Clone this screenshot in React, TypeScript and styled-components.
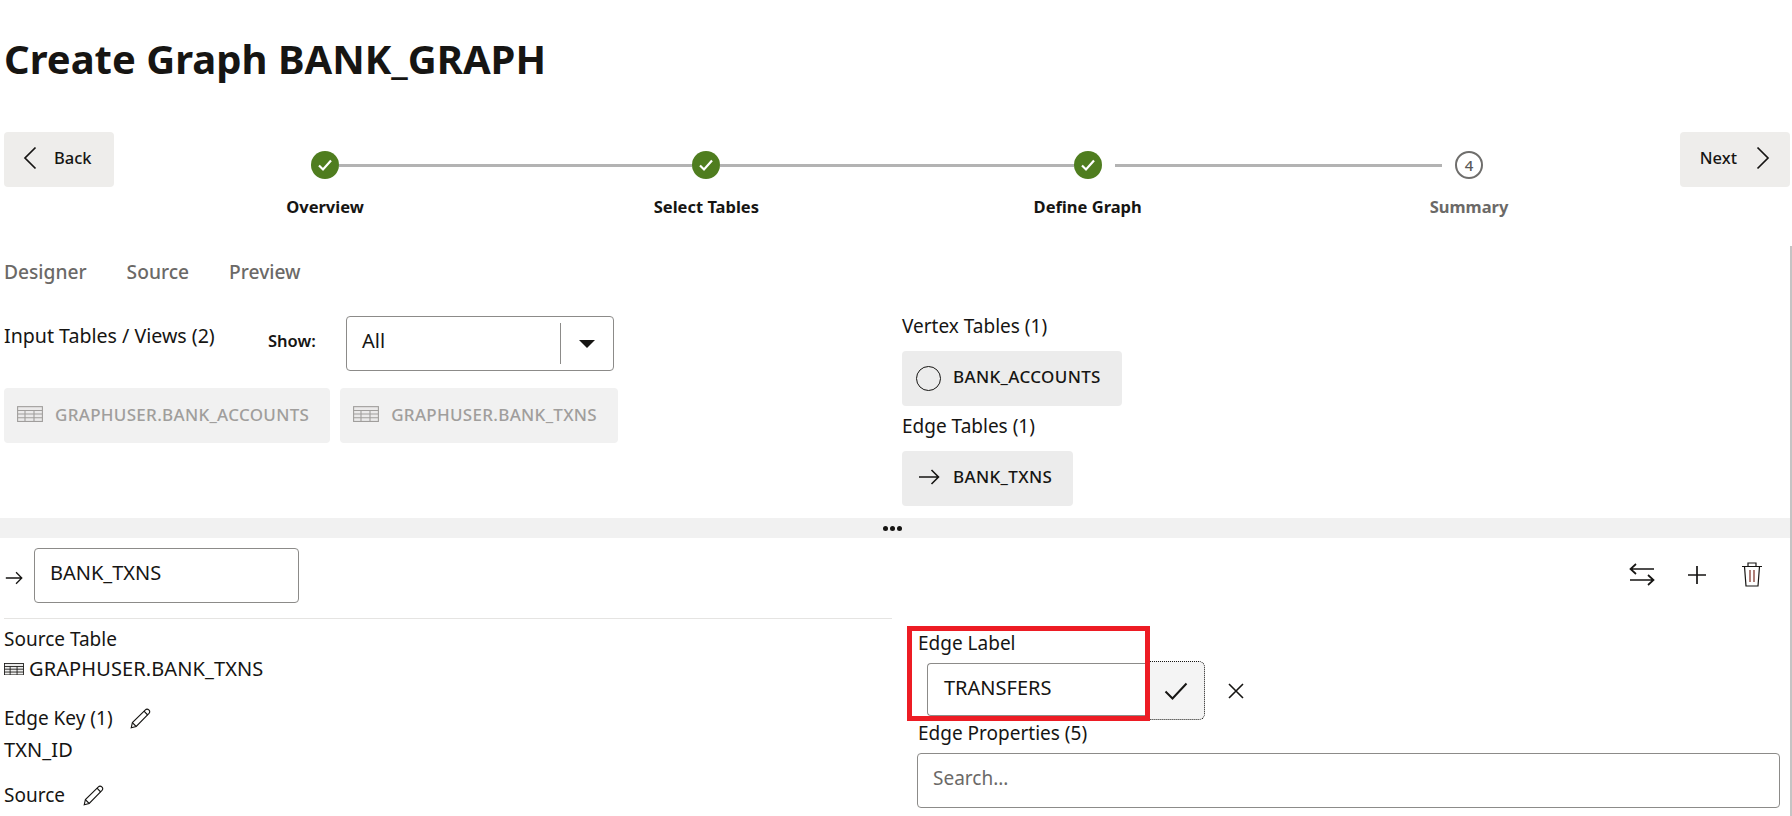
import React from "react";
import styled, { createGlobalStyle } from "styled-components";

const GlobalStyle = createGlobalStyle`
  html, body {
    margin: 0;
    padding: 0;
    background: #fff;
  }
  body {
    font-family: "Noto Sans", "Open Sans", sans-serif;
    color: #161513;
    overflow: hidden;
  }
`;

const ChevronIcon = ({ flip }: { flip?: boolean }) => (
  <svg width="14" height="24" viewBox="0 0 14 24" fill="none" stroke="#161513" strokeWidth="1.7" style={flip ? { transform: "scaleX(-1)" } : undefined}>
    <path d="M12.5 1.5 2 12l10.5 10.5" />
  </svg>
);

const CheckIcon = () => (
  <svg width="16" height="14" viewBox="0 0 16 14" fill="none" stroke="#fff" strokeWidth="2.2">
    <path d="M2 7.5 6 11.5 14 2.5" />
  </svg>
);

const TableIcon = ({ color, size = 26 }: { color: string; size?: number }) => (
  <svg width={size} height={size * 0.62} viewBox="0 0 26 16" fill="none" stroke={color} strokeWidth="1.1">
    <rect x="0.6" y="0.6" width="24.8" height="14.8" fill={color} fillOpacity="0.08" />
    <path d="M0.6 4.5H25.4M0.6 8H25.4M0.6 11.7H25.4M8 4.5V15.4M17 4.5V15.4" />
  </svg>
);

const ArrowIcon = ({ width = 22 }: { width?: number }) => (
  <svg width={width} height="16" viewBox="0 0 22 16" fill="none" stroke="#161513" strokeWidth="1.6">
    <path d="M1 8H20.5M13.5 1 20.5 8 13.5 15" />
  </svg>
);

const PencilIcon = () => (
  <svg width="21" height="21" viewBox="0 0 21 21" fill="none" stroke="#161513" strokeWidth="1.1">
    <path d="M1.2 19.8 2.4 14.6 15.4 1.8C16.3 0.9 17.8 0.9 18.8 1.9 19.8 2.9 19.9 4.4 19 5.4L6.2 18.5Z" />
    <path d="M2.4 14.6 6.2 18.5M14 3.2 17.7 7" />
  </svg>
);

const SwapIcon = () => (
  <svg width="26" height="23" viewBox="0 0 26 23" fill="none" stroke="#161513" strokeWidth="1.7" style={{ marginRight: -3 }}>
    <path d="M25 6H1.5M7 1 1.5 6 7 11" />
    <path d="M1 17H24.5M19 12 24.5 17 19 22" />
  </svg>
);

const PlusIcon = () => (
  <svg width="18" height="18" viewBox="0 0 18 18" fill="none" stroke="#161513" strokeWidth="1.7">
    <path d="M9 0V18M0 9H18" />
  </svg>
);

const TrashIcon = () => (
  <svg width="20" height="25" viewBox="0 0 20 25" fill="none" stroke="#161513" strokeWidth="1.2">
    <path d="M0 4.5H20M6 4.5V1H14V4.5" />
    <path d="M2.5 4.5 4 24H16L17.5 4.5" />
    <path d="M8 8V20M12 8V20" stroke="#7a2a20" />
  </svg>
);

const CloseIcon = () => (
  <svg width="16" height="16" viewBox="0 0 16 16" fill="none" stroke="#161513" strokeWidth="1.6">
    <path d="M1 1 15 15M15 1 1 15" />
  </svg>
);

const BigCheckIcon = () => (
  <svg width="24" height="18" viewBox="0 0 24 18" fill="none" stroke="#161513" strokeWidth="2">
    <path d="M1.5 9.5 8.5 16.5 22.5 1.5" />
  </svg>
);

const Page = styled.div`
  position: relative;
  width: 1792px;
  height: 816px;
  overflow: hidden;
`;

const Title = styled.h1`
  margin: 0;
  height: 132px;
  padding: 32px 0 0 4px;
  box-sizing: border-box;
  font-size: 40px;
  line-height: 54px;
  font-weight: 700;
  color: #161513;
`;

const WizardRow = styled.div`
  display: flex;
  align-items: flex-start;
  height: 114px;
  padding: 0 2px 0 4px;
`;

const NavButton = styled.button<{ $next?: boolean }>`
  display: flex;
  align-items: center;
  justify-content: ${(p) => (p.$next ? "flex-end" : "flex-start")};
  gap: ${(p) => (p.$next ? "19px" : "17px")};
  width: 110px;
  height: 55px;
  padding: ${(p) => (p.$next ? "0 20px 4px 0" : "0 0 4px 19px")};
  flex: none;
  border: 0;
  border-radius: 4px;
  background: #eeedeb;
  color: #161513;
  font-family: inherit;
  font-size: 16.5px;
  font-weight: 500;
`;

const Train = styled.div`
  flex: 1;
  padding-top: 19px;
`;

const Track = styled.div`
  display: flex;
  align-items: center;
  height: 28px;
  margin: 0 197px;
`;

const Circle = styled.div<{ $done?: boolean }>`
  display: flex;
  align-items: center;
  justify-content: center;
  flex: none;
  box-sizing: border-box;
  width: 28px;
  height: 28px;
  border-radius: 50%;
  background: ${(p) => (p.$done ? "#4f7d1f" : "#fff")};
  border: ${(p) => (p.$done ? "0" : "2px solid #6f6e6c")};
  color: #5a5957;
  font-size: 15px;
  font-weight: 500;
`;

const Segment = styled.div`
  display: flex;
  flex: 1;
`;

const Line = styled.div<{ $inset?: boolean }>`
  flex: 1;
  height: 3px;
  background: #b3b3b3;
  margin: ${(p) => (p.$inset ? "0 13px" : "0")};
`;

const StepLabels = styled.div`
  display: grid;
  grid-template-columns: repeat(4, 381.33px);
  justify-content: center;
  margin-top: 17px;
`;

const StepLabel = styled.div<{ $pending?: boolean }>`
  text-align: center;
  font-size: 16.5px;
  line-height: 22px;
  font-weight: 700;
  color: ${(p) => (p.$pending ? "#6b6967" : "#161513")};
`;

const Tabs = styled.div`
  display: flex;
  gap: 40px;
  height: 54px;
  padding: 13px 0 0 4px;
  box-sizing: border-box;
`;

const Tab = styled.div`
  font-size: 19.2px;
  line-height: 26px;
  font-weight: 500;
  color: #6b6967;
`;

const Designer = styled.div`
  display: grid;
  grid-template-columns: 902px 1fr;
  height: 218px;
`;

const LeftPane = styled.div`
  padding: 16px 0 0 4px;
`;

const InputsHeader = styled.div`
  display: grid;
  grid-template-columns: 264px 78px 268px;
  height: 72px;
`;

const SectionLabel = styled.div`
  font-size: 19px;
  line-height: 26px;
  color: #161513;
`;

const InputsLabel = styled(SectionLabel)`
  font-size: 19.6px;
  margin-top: 7px;
`;

const ShowLabel = styled.span`
  margin-top: 13px;
  font-size: 16.5px;
  line-height: 24px;
  font-weight: 600;
`;

const Select = styled.div`
  display: flex;
  align-items: center;
  box-sizing: border-box;
  width: 268px;
  height: 55px;
  border: 1px solid #8c8b89;
  border-radius: 4px;
  padding-left: 15px;
  font-size: 20px;
`;

const SelectValue = styled.span`
  flex: 1;
  padding-bottom: 6px;
`;

const SelectDivider = styled.span`
  width: 1px;
  height: 41px;
  background: #8c8b89;
`;

const Caret = styled.span`
  width: 0;
  height: 0;
  margin: 0 18px 0 18px;
  border-left: 8px solid transparent;
  border-right: 8px solid transparent;
  border-top: 8px solid #161513;
`;

const ChipRow = styled.div`
  display: flex;
  gap: 10px;
`;

const Chip = styled.div<{ $disabled?: boolean }>`
  display: inline-flex;
  align-items: center;
  height: 55px;
  box-sizing: border-box;
  padding: 0 21px ${(p) => (p.$disabled ? "2px" : "4px")} ${(p) => (p.$disabled ? "13px" : "16px")};
  gap: ${(p) => (p.$disabled ? "12px" : "13px")};
  border-radius: 4px;
  background: ${(p) => (p.$disabled ? "#f1f1f1" : "#ececec")};
  color: ${(p) => (p.$disabled ? "#a09e9c" : "#161513")};
  font-size: 17px;
  letter-spacing: ${(p) => (p.$disabled ? "0.3px" : "0.35px")};
  font-weight: 500;
  white-space: nowrap;
`;

const RightPane = styled.div`
  display: flex;
  flex-direction: column;
  align-items: flex-start;
  padding-top: 13px;
`;

const VertexIcon = styled.span`
  display: block;
  box-sizing: border-box;
  width: 25px;
  height: 25px;
  border-radius: 50%;
  border: 1.5px solid #161513;
  margin: 4px -1px 0 -2px;
`;

const VertexChip = styled(Chip)`
  margin: 12px 0 7px;
`;

const EdgeChip = styled(Chip)`
  margin-top: 12px;
`;

const Splitter = styled.div`
  display: flex;
  align-items: center;
  justify-content: center;
  gap: 2px;
  height: 20px;
  padding-right: 8px;
  background: #f1f1f1;
`;

const Dot = styled.span`
  width: 5px;
  height: 5px;
  border-radius: 50%;
  background: #161513;
`;

const Detail = styled.div`
  display: grid;
  grid-template-columns: 892px 1fr;
`;

const DetailLeft = styled.div`
  padding-left: 4px;
`;

const NameRow = styled.div`
  display: flex;
  align-items: center;
  gap: 11px;
  height: 81px;
  padding: 10px 0 15px;
  box-sizing: border-box;
  border-bottom: 1px solid #e5e4e2;
`;

const NameArrow = styled.span`
  display: flex;
  margin: 5px 0 0 1px;
`;

const TextBox = styled.div<{ $width: string }>`
  box-sizing: border-box;
  width: ${(p) => p.$width};
  height: 55px;
  padding: 11px 15px 0;
  border: 1px solid #8c8b89;
  border-radius: 4px;
  font-size: 20px;
  line-height: 26px;
  background: #fff;
`;

const Value = styled.div<{ $top: number }>`
  display: flex;
  align-items: center;
  gap: 5px;
  margin-top: ${(p) => p.$top}px;
  font-size: 20px;
  line-height: 26px;
  letter-spacing: 0.1px;
`;

const SourceTable = styled.div`
  margin-top: 7px;
`;

const FieldBlock = styled.div<{ $top: number }>`
  margin-top: ${(p) => p.$top}px;
`;

const EditRow = styled.div<{ $gap: number }>`
  display: flex;
  align-items: center;
  gap: ${(p) => p.$gap}px;
  font-size: 19px;
  line-height: 26px;
`;

const DetailRight = styled.div`
  padding: 10px 12px 0 26px;
`;

const Toolbar = styled.div`
  display: flex;
  justify-content: flex-end;
  align-items: center;
  gap: 36px;
  height: 55px;
  margin: 0 18px 27px 0;
  padding-bottom: 2px;
  box-sizing: border-box;
`;

const LabelEditor = styled.div`
  display: flex;
  align-items: center;
  margin: 5px 0 0 9px;
  height: 59px;
`;

const ConfirmButton = styled.div`
  display: flex;
  align-items: center;
  justify-content: center;
  box-sizing: border-box;
  width: 55px;
  height: 59px;
  padding-right: 3px;
  background: #f4f4f4;
  border: 1px dotted #161513;
  border-left: 0;
  border-radius: 0 6px 6px 0;
`;

const CancelButton = styled.div`
  display: flex;
  margin-left: 23px;
`;

const LabelBox = styled(TextBox)`
  border-radius: 4px 0 0 4px;
  height: 53px;
  border-right: 0;
  padding-top: 11px;
  margin-top: -2px;
  padding-left: 16px;
`;

const Callout = styled.div`
  position: absolute;
  left: 907px;
  top: 626px;
  width: 243px;
  height: 95px;
  box-sizing: border-box;
  border: 5px solid #ed1c24;
`;

const SearchBox = styled(TextBox)`
  padding-top: 11px;
  color: #6b6967;
  margin: 7px 0 0 -1px;
  font-size: 19px;
`;

const ScrollThumb = styled.div`
  position: absolute;
  top: 246px;
  right: 0;
  bottom: 0;
  width: 2px;
  background: #c4c4c4;
`;

const App = () => {
  return (
    <Page>
      <GlobalStyle />
      <Title>Create Graph BANK_GRAPH</Title>
      <WizardRow>
        <NavButton>
          <ChevronIcon />
          Back
        </NavButton>
        <Train>
          <Track>
            <Circle $done><CheckIcon /></Circle>
            <Segment><Line /></Segment>
            <Circle $done><CheckIcon /></Circle>
            <Segment><Line /></Segment>
            <Circle $done><CheckIcon /></Circle>
            <Segment><Line $inset /></Segment>
            <Circle>4</Circle>
          </Track>
          <StepLabels>
            <StepLabel>Overview</StepLabel>
            <StepLabel>Select Tables</StepLabel>
            <StepLabel>Define Graph</StepLabel>
            <StepLabel $pending>Summary</StepLabel>
          </StepLabels>
        </Train>
        <NavButton $next>
          Next
          <ChevronIcon flip />
        </NavButton>
      </WizardRow>
      <Tabs>
        <Tab>Designer</Tab>
        <Tab>Source</Tab>
        <Tab>Preview</Tab>
      </Tabs>
      <Designer>
        <LeftPane>
          <InputsHeader>
            <InputsLabel>Input Tables / Views (2)</InputsLabel>
            <ShowLabel>Show:</ShowLabel>
            <Select>
              <SelectValue>All</SelectValue>
              <SelectDivider />
              <Caret />
            </Select>
          </InputsHeader>
          <ChipRow>
            <Chip $disabled><TableIcon color="#a09e9c" />GRAPHUSER.BANK_ACCOUNTS</Chip>
            <Chip $disabled><TableIcon color="#a09e9c" />GRAPHUSER.BANK_TXNS</Chip>
          </ChipRow>
        </LeftPane>
        <RightPane>
          <SectionLabel>Vertex Tables (1)</SectionLabel>
          <VertexChip><VertexIcon />BANK_ACCOUNTS</VertexChip>
          <SectionLabel>Edge Tables (1)</SectionLabel>
          <EdgeChip><ArrowIcon />BANK_TXNS</EdgeChip>
        </RightPane>
      </Designer>
      <Splitter>
        <Dot />
        <Dot />
        <Dot />
      </Splitter>
      <Detail>
        <DetailLeft>
          <NameRow>
            <NameArrow><ArrowIcon width={18} /></NameArrow>
            <TextBox $width="265px">BANK_TXNS</TextBox>
          </NameRow>
          <SourceTable>
            <SectionLabel>Source Table</SectionLabel>
            <Value $top={4}><TableIcon color="#161513" size={20} />GRAPHUSER.BANK_TXNS</Value>
          </SourceTable>
          <FieldBlock $top={23}>
            <EditRow $gap={17}>Edge Key (1)<PencilIcon /></EditRow>
            <Value $top={6}>TXN_ID</Value>
          </FieldBlock>
          <FieldBlock $top={19}>
            <EditRow $gap={18}>Source<PencilIcon /></EditRow>
          </FieldBlock>
        </DetailLeft>
        <DetailRight>
          <Toolbar>
            <SwapIcon />
            <PlusIcon />
            <TrashIcon />
          </Toolbar>
          <SectionLabel>Edge Label</SectionLabel>
          <LabelEditor>
            <LabelBox $width="223px">TRANSFERS</LabelBox>
            <ConfirmButton><BigCheckIcon /></ConfirmButton>
            <CancelButton><CloseIcon /></CancelButton>
          </LabelEditor>
          <SectionLabel>Edge Properties (5)</SectionLabel>
          <SearchBox $width="863px">Search...</SearchBox>
        </DetailRight>
      </Detail>
      <Callout />
      <ScrollThumb />
    </Page>
  );
};

export default App;
